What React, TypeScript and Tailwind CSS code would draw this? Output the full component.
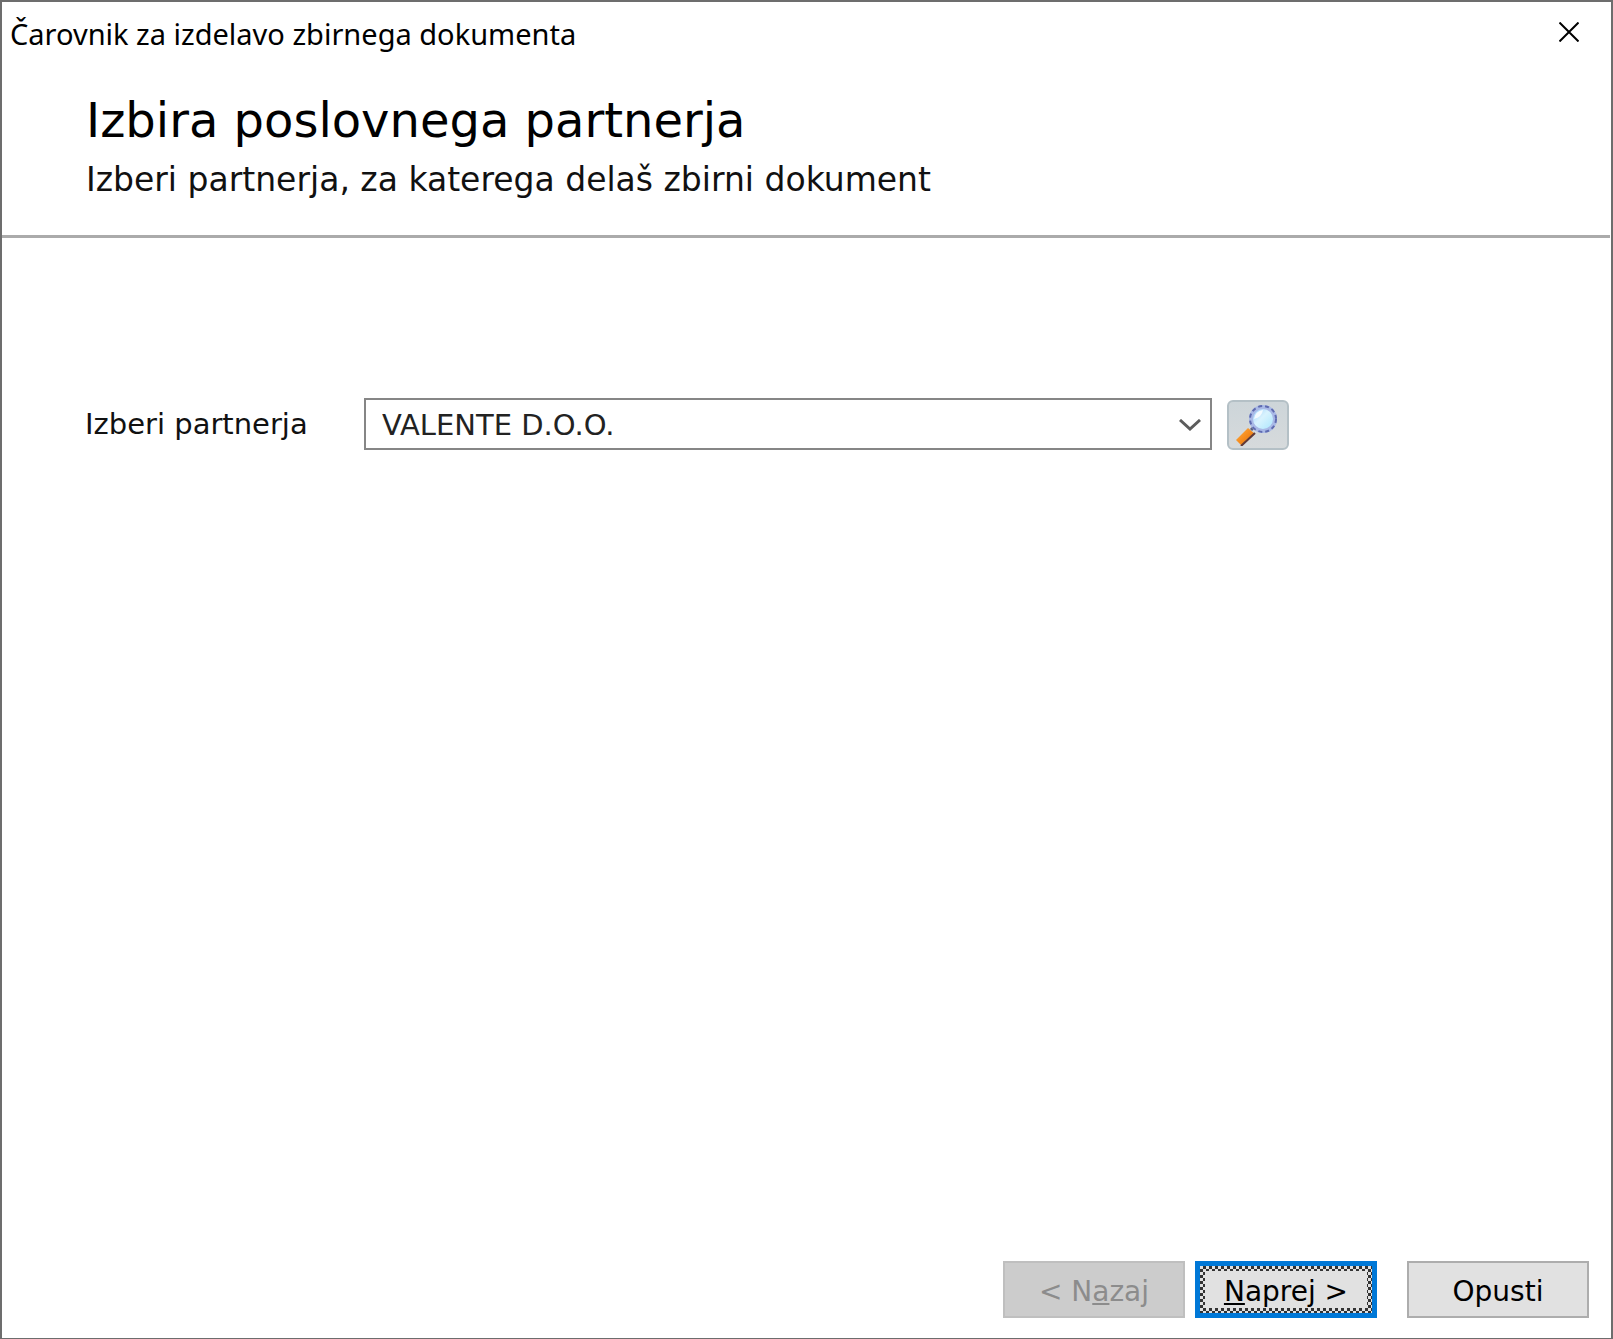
const partners = ["VALENTE D.O.O."];

const SearchIcon = () => {
    return (
        <svg viewBox="0 0 44 42" className="h-[42px] w-[44px]" aria-hidden="true">
            <defs>
                <linearGradient id="lens" x1="0" y1="0" x2="1" y2="1">
                    <stop offset="0" stopColor="#8fc8fb" />
                    <stop offset="0.45" stopColor="#d9f3fe" />
                    <stop offset="1" stopColor="#a4e4fd" />
                </linearGradient>
                <linearGradient id="handle" x1="0" y1="0" x2="1" y2="1">
                    <stop offset="0" stopColor="#ffb347" />
                    <stop offset="0.5" stopColor="#f58a1c" />
                    <stop offset="1" stopColor="#c8701c" />
                </linearGradient>
            </defs>
            <path d="M12 24 L19 30 L6 42 L0 36 Z" fill="url(#handle)" />
            <path d="M19 29 L5 42" stroke="#5d3a3c" strokeWidth="2" />
            <path d="M15 26 L19 22" stroke="#5f6480" strokeWidth="3" />
            <circle cx="27" cy="15" r="12" fill="url(#lens)" stroke="#a9b9e6" strokeWidth="4" />
            <circle cx="27" cy="15" r="13" fill="none" stroke="#5f6bb0" strokeWidth="2" strokeDasharray="4 3" />
            <path d="M18 15 Q19 7 27 6 Q26 13 18 15 Z" fill="#f4fbff" />
        </svg>
    );
};

const App = () => {
    return (
        <main className="flex min-h-screen flex-col border-2 border-b border-[#6d6d6d] bg-white font-['DejaVu_Sans',Verdana,sans-serif] text-black">
            <div className="flex h-[66px] items-start justify-between pl-2 pr-[20px] pt-[8px]">
                <h1 className="pt-[4px] font-['Noto_Sans','Segoe_UI',sans-serif] text-[29px] leading-[40px]">Čarovnik za izdelavo zbirnega dokumenta</h1>
                <button type="button" aria-label="Zapri" className="flex size-[44px] items-center justify-center">
                    <svg viewBox="0 0 20 20" className="size-[20px]" fill="none" stroke="#000" strokeWidth="2">
                        <path d="M0.5 0.5 L19.5 19.5 M19.5 0.5 L0.5 19.5" />
                    </svg>
                </button>
            </div>

            <header className="mr-[1px] h-[170px] border-b-3 border-[#ababab] pl-[84px] pt-[24px]">
                <h2 className="text-[48px] leading-[56px]">Izbira poslovnega partnerja</h2>
                <p className="pt-[12px] text-[33px] leading-[40px] text-[#111]">Izberi partnerja, za katerega delaš zbirni dokument</p>
            </header>

            <section className="flex flex-1 items-start pl-[83px] pt-[160px]">
                <label htmlFor="partner" className="w-[279px] shrink-0 text-[29px] leading-[52px] text-[#111]">Izberi partnerja</label>
                <div className="relative w-[848px]">
                    <select id="partner" className="block h-[52px] w-full appearance-none border-2 border-[#868686] bg-white pl-4 pr-[50px] pt-[4px] text-[29px] text-[#222]">
                        {
                            partners.map((partner) => {
                                return <option key={partner}>{partner}</option>
                            })
                        }
                    </select>
                    <svg viewBox="0 0 22 12" className="pointer-events-none absolute right-[11px] top-[21px] h-[12px] w-[22px]" fill="none" stroke="#5c5c5c" strokeWidth="3">
                        <path d="M1 1 L11 10 L21 1" />
                    </svg>
                </div>
                <button type="button" aria-label="Išči" className="ml-[15px] mt-[2px] flex h-[50px] w-[62px] items-center justify-center rounded-md border-2 border-[#b4c0c6] bg-linear-to-b from-[#cdd5d9] to-[#d6dadc]">
                    <SearchIcon />
                </button>
            </section>

            <footer className="flex justify-end pb-[20px] pr-[22px] text-[28px]">
                <button type="button" disabled className="h-[57px] w-[182px] border-2 border-[#bfbfbf] bg-[#cccccc] pt-[4px] text-[#8c8c8c]">
                    &lt; N<span className="underline">a</span>zaj
                </button>
                <button type="button" className="ml-[10px] h-[57px] w-[182px] border-5 border-[#0078d7] bg-[repeating-conic-gradient(#333_0_25%,#e1e1e1_0_50%)] bg-size-[6px_6px] bg-origin-padding p-[5px]">
                    <span className="flex h-full items-center justify-center whitespace-pre bg-[#e1e1e1] pt-[4px]"><span className="underline">N</span>aprej &gt;</span>
                </button>
                <button type="button" className="ml-[30px] h-[57px] w-[182px] border-2 border-[#adadad] bg-[#e1e1e1] pt-[4px]">Opusti</button>
            </footer>
        </main>
    );
};

export default App;
